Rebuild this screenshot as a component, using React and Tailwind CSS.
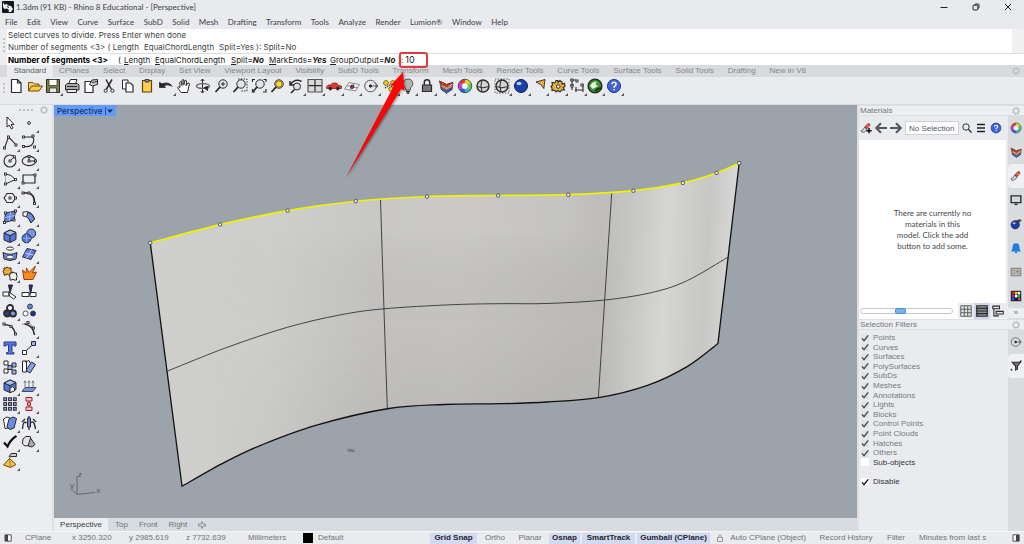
import React from "react";

const K = "#2b2b2b";

function Svg({ children, label, size = "size-4" }) {
  return (
    <svg viewBox="0 0 16 16" className={"block shrink-0 overflow-visible " + size} fill="none" stroke={K} strokeWidth="1" role="img" aria-label={label}>
      {children}
    </svg>
  );
}

const node = (x, y) => <rect key={x + "-" + y} x={x - 1} y={y - 1} width="2" height="2" fill="#fff" strokeWidth=".9" />;

const lens = (
  <>
    <circle cx="9" cy="6" r="4.2" fill="#dfe6ee" />
    <path d="M6 9.2 1.5 14" strokeWidth="1.8" />
  </>
);

const wheel = (
  <g strokeWidth="3.4">
    <path d="M8 3A5 5 0 0 1 12.3 5.5" stroke="#f5d020" />
    <path d="M12.3 5.5A5 5 0 0 1 12.3 10.5" stroke="#5ad03a" />
    <path d="M12.3 10.5A5 5 0 0 1 8 13" stroke="#20c0c0" />
    <path d="M8 13A5 5 0 0 1 3.7 10.5" stroke="#3050f0" />
    <path d="M3.7 10.5A5 5 0 0 1 3.7 5.5" stroke="#d030d8" />
    <path d="M3.7 5.5A5 5 0 0 1 8 3" stroke="#f03028" />
    <circle cx="8" cy="8" r="6.8" strokeWidth=".9" stroke="#444" />
    <circle cx="8" cy="8" r="3.2" strokeWidth=".5" stroke="#777" fill="#fff" />
  </g>
);

const globe = (
  <>
    <circle cx="8" cy="8" r="6" fill="#d3d3d3" strokeWidth="1.4" />
    <path d="M2.4 8.6Q8 11 13.6 8.6M7 2.2Q4.8 8 7 13.8" strokeWidth="1" />
  </>
);

const layers = (
  <>
    <path d="M1.5 3 8.5 6.5 15 4.5 14 11.5 8.5 15 3.4 11.4Z" fill="#fff" strokeWidth=".8" />
    <path d="M1.5 3 8.5 6.5 15 4.5 9 9 3 6Z" fill="#d83a22" stroke="#7c1d10" strokeWidth=".8" />
    <path d="M2.6 6.5 8.5 10.2 14.5 7 14.2 9 8.6 12.2 3 8.7Z" fill="#f0b070" stroke="#51301b" strokeWidth=".6" />
    <path d="M3 9.2 8.5 12.5 14.2 9.5 13.7 11.7 8.5 15 3.4 11.6Z" fill="#4b62c8" stroke="#1f2445" strokeWidth=".6" />
  </>
);

const brush = (
  <>
    <path d="M6 7 10 2.5Q13 .8 13.5 4L9.5 9Z" fill="#e0452d" stroke="#742016" strokeWidth=".7" />
    <path d="M9 4.5 12 7" stroke="#f7b7a4" />
    <path d="M6 7.2 9.3 9.4Q8.5 12 6 13Q1.5 15 1.5 11.5Q4.5 11.5 6 7.2Z" fill="#e3e3e3" strokeWidth=".9" />
  </>
);

const helpMark = (
  <>
    <circle cx="8" cy="8" r="6.6" fill="#3f63d8" stroke="#27408f" />
    <path d="M6 6.3Q6 4.3 8 4.3T10.1 6.2Q10.1 7.4 8.2 8.6V9.7M8.2 11v1.3" stroke="#fff" strokeWidth="1.5" />
  </>
);

const osnapMark = (
  <>
    <circle cx="7.5" cy="8" r="5.8" stroke="#555" />
    <path d="M7 8H15M12.5 5.8 15 8 12.5 10.2" stroke="#555" />
    <circle cx="7.5" cy="8" r="1.2" fill="#222" />
  </>
);

const topIcons = [
  ["New", false, <path d="M3.5 1.5H9.5L13 5V14.5H3.5ZM9.5 1.5V5H13" fill="#fff" strokeWidth="1.2" />],
  ["Open", false, <g stroke="#6d4d13"><path d="M1.5 13V4.5H6L7.5 6H12V8" fill="#f5d26a" /><path d="M1.5 13 4.5 8H15.5L12 13Z" fill="#ffc94a" /></g>],
  ["Save", true, <><path d="M1.5 1.5H14.5V14.5H1.5Z" fill="#80803c" /><path d="M4 1.5H12V7.5H4Z" fill="#fff" strokeWidth=".7" /><path d="M4.5 10H11.5V14.5H4.5Z" fill="#e8e8e8" strokeWidth=".7" /></>],
  ["Print", false, <><path d="M4.5 6 6.5 1.5H13L11.5 6" fill="#fff" /><path d="M1.5 7 3.5 5.5H13.5L15 7V12H1.5Z" fill="#a9a9a9" /><path d="M3 11.5H12.5V14.5H3Z" fill="#e7e7e7" /><path d="M3 8.5H13" /></>],
  ["Properties", false, <><path d="M2 3.5H10V14.5H2Z" fill="#fff" strokeWidth="1.2" /><path d="M6.5 6.5 9 2 14.5 1.5V6.5L9.5 8Z" fill="#ccc" /><path d="M9 4.5 14 3.5" /></>],
  ["Cut", false, <><path d="M5 1.5 10.3 11M11 1.5 5.5 11" strokeWidth="1.5" /><circle cx="4.7" cy="12.7" r="1.6" /><circle cx="11.4" cy="12.7" r="1.6" /></>],
  ["Copy", false, <><path d="M2.5 2H8V11H2.5Z" fill="#fff" /><path d="M6 5H10.5L13 7.5V14H6Z" fill="#fff" strokeWidth="1.2" /></>],
  ["Paste", false, <><path d="M3.5 2.5H12.5V14H3.5Z" fill="#ffcf4d" stroke="#5c4510" strokeWidth="1.2" /><path d="M6 1.5H10V4H6Z" fill="#8b8b8b" strokeWidth=".8" /></>],
  ["Undo", true, <path d="M1.5 4.2V9.5H7.5L5.8 7.7Q9.5 5.8 14.2 8.2Q10.5 3.2 4 5.9Z" fill="#222" strokeWidth=".8" />],
  ["Pan", false, <path d="M5 14.5 1.5 9.5Q2 8 4 9.5L3.8 4Q4.5 3 5.4 4L6 7.5V2Q7 1 7.8 2V7L8.8 2.5Q10 1.6 10.5 3L10.2 7.7 12 5Q13.2 4.6 13.4 6L11.5 14.5Z" fill="#fff" />],
  ["Rotate view", false, <><path d="M7.5 1V15M5.7 3 7.5 1 9.3 3M5.7 13 7.5 15 9.3 13" /><ellipse cx="8" cy="8" rx="6.5" ry="2.4" stroke="#666" strokeWidth="1.4" /><path d="M9 9.5 12.5 12.5 13 8.5Z" fill="#222" /></>],
  ["Zoom", false, <>{lens}<path d="M7 6H11M9 4V8" /></>],
  ["Zoom window", false, <>{lens}<path d="M6 1H15V13H9" strokeDasharray="1.5 1.3" /></>],
  ["Zoom extents", false, <>{lens}<path d="M1.5 4V1.5H4M12.5 1.5H15V4M15 11V14H12M1.5 11V14H4" strokeWidth="1.2" /></>],
  ["Zoom selected", false, <>{lens}<circle cx="9" cy="6" r="3.2" fill="#ffd83d" stroke="#8a6900" /></>],
  ["Undo view", true, <><circle cx="9" cy="8.5" r="3.5" fill="#ddd" /><path d="M6.5 11.5 3 15" strokeWidth="1.6" /><path d="M2 3V7H6M2.5 6.5Q7 0 13.5 3.5" strokeWidth="1.5" /></>],
  ["Viewports", true, <><path d="M1 1.5H15V14H1Z" fill="#d9d9d9" stroke="#555" strokeWidth="1.2" /><path d="M8 2V13.5M1.5 7.7H14.5" strokeWidth="1.2" /></>],
  ["Car", true, <><path d="M.5 9 2.2 7H5L6.5 5H10.5L12 7.3 15.5 8V10.5H.5Z" fill="#dd3a30" stroke="#7d1b16" strokeWidth=".7" /><circle cx="4.3" cy="10.6" r="1.4" fill="#222" /><circle cx="11.8" cy="10.6" r="1.4" fill="#222" /></>],
  ["Construction plane", true, <><path d="M.5 11 5 4.5 15.5 6.5 11.5 13Z M2.8 7.7 13.5 9.8M5.9 12 10.3 5.5" fill="#eee" stroke="#777" strokeWidth=".8" /><circle cx="8.2" cy="8.8" r="1.7" fill="#b34" /></>],
  ["Object snap", true, osnapMark],
  ["Select", true, <><circle cx="4" cy="5" r="2.4" fill="#f5ce2c" stroke="#8a6a00" /><circle cx="11" cy="5" r="2.4" fill="#f5ce2c" stroke="#8a6a00" /><path d="M3 10 8 7 13 11" strokeDasharray="1.4 1" strokeWidth="1.4" /><circle cx="9" cy="11" r="2.2" fill="#f5ce2c" stroke="#8a6a00" /></>],
  ["Hide", true, <><path d="M5.5 10Q3.1 7.7 3.2 5.5Q3.7 1 8 1T12.8 5.5Q12.9 7.7 10.5 10V12H5.5Z" fill="#b4b4b4" stroke="#555" /><path d="M6 13.3H10M6.7 15H9.3" strokeWidth="1.3" /></>],
  ["Lock", true, <><path d="M5.3 7V4.3Q5.3 1.7 8 1.7T10.7 4.3V7" strokeWidth="1.5" /><path d="M3.5 7H12.5V13.5H3.5Z" fill="#777" strokeWidth="1.2" /></>],
  ["Layers", true, layers],
  ["Render colour", false, wheel],
  ["Shade", false, globe],
  ["Shade selected", true, <><path d="M1 1H15V15H1Z" strokeDasharray="1.4 1.4" stroke="#555" />{globe}</>],
  ["Render", true, <><circle cx="8" cy="8" r="6.5" fill="#1d3fae" stroke="#101d4a" /><ellipse cx="6" cy="5.5" rx="2.5" ry="1.8" fill="#b4cdfa" stroke="none" /></>],
  ["Spotlight", true, <path d="M5 4 14 1.5 12.8 10.5Q10.5 5.5 5 4Z" fill="#f2ae36" strokeWidth=".9" />],
  ["Options", true, <><path d="M6 2.5H8V4.5L10 2.5 12 4V6L14.5 5.5 15 8.5 13 9.5 14.5 12H11.5L10 14 8 12.5 6 14 4.5 12 2 12.5V10L1 8.5 2.5 7 2 4.5 5 5Z" fill="#f1b23a" strokeWidth="1.1" /><circle cx="8.3" cy="8.5" r="1.8" fill="#eee" /></>],
  ["Dimensions", true, <><path d="M3 1V12M1 2H7M1 7H5M6 12H14M7 9V14M14 6V14" strokeWidth="1.1" />{node(3, 2)}{node(8, 3)}{node(3, 8)}{node(13, 7)}</>],
  ["Grasshopper", true, <><circle cx="8" cy="8" r="6.8" fill="#3c9632" strokeWidth="1.6" /><path d="M3 8Q6 2.5 10 4 7 6 11 8L6 11Z" fill="#e5f5db" stroke="none" /><path d="M8 13Q11 10 14 10" stroke="#123c10" strokeWidth="2" /></>],
  ["Help", true, helpMark],
];

const cube = "M2 5 8 2 14 4.5V11.5L8 14.5 2 12ZM2 5 8 7.5 14 4.5M8 7.5V14.5";

const sideIcons = [
  ["Pointer", false, <path d="M5 2V12L7.3 10 9.3 14 11 13 9 9.4H12Z" fill="#fff" />],
  ["Point", true, <circle cx="8" cy="8" r="1.4" fill="#fff" />],
  ["Polyline", true, <><path d="M2.5 14 6.5 3 9.5 6 14 11" strokeWidth="1.1" />{node(2.5, 14)}{node(6.5, 3)}{node(14, 11)}</>],
  ["Curve", true, <><path d="M2.5 3H9Q14 2.5 12.5 8T2.5 12.5" strokeWidth="1.1" />{node(2.5, 3)}{node(12, 2)}{node(2.5, 12.5)}{node(13.5, 13)}</>],
  ["Circle", true, <><circle cx="8" cy="8" r="6" strokeWidth="1.1" /><path d="M8 8 12.3 3.8" />{node(8, 8)}{node(12.3, 3.8)}</>],
  ["Ellipse", true, <><ellipse cx="8" cy="8" rx="6.8" ry="4.6" strokeWidth="1.1" /><path d="M8 3.5V8H14" />{node(8, 8)}{node(8, 3.5)}{node(14.5, 8)}</>],
  ["Arc", true, <><path d="M3.5 3Q9 3 13.5 8.5M3.5 13 13.5 8.5" strokeWidth="1" /><path d="M3.5 3V13" stroke="#aaa" />{node(3.5, 3)}{node(3.5, 13)}{node(13.5, 8.5)}</>],
  ["Rectangle", true, <><path d="M2 4H14V12H2Z" strokeWidth="1.2" />{node(2, 12)}{node(14, 4)}</>],
  ["Polygon", true, <><path d="M5 3.5H10.5L13.5 8 10.5 12.5H5L2 8Z" strokeWidth="1.1" />{node(8, 8)}{node(13.5, 8)}</>],
  ["Fillet", true, <><path d="M2 3H7Q13.5 4 13.5 13" strokeWidth="1.7" />{node(2, 3)}{node(8, 3)}{node(13.5, 13.5)}</>],
  ["Surface", true, <><path d="M3.5 4 13.5 2 12 11 2.5 13.5Z" fill="#6482dc" /><path d="M8.5 3 7 12.2M3 8.5 13 6.5" stroke="#c6d2f8" strokeWidth=".7" />{node(3.5, 4)}{node(13.5, 2)}{node(2.5, 13.5)}{node(12, 11)}</>],
  ["Surface tools", true, <><path d="M2 3Q11 1 13.5 10L10 14Q8.5 7 2 7Z" fill="#fff" /><path d="M7 3Q12 5 13.5 10L10 14Q8.5 10 5.5 7.5Z" fill="#6d8ae4" /></>],
  ["Box", true, <><path d={cube} fill="#5476df" /><path d="M2 5 8 7.5 14 4.5 8 2Z" fill="#a8bdf8" /></>],
  ["Solids", true, <><circle cx="10.2" cy="5.5" r="4.5" fill="#7995ec" /><circle cx="5.6" cy="10.3" r="4.5" fill="#4f72dc" /><path d="M1.5 10.3H10M5.6 6V14.5" stroke="#b7c7fa" strokeWidth=".7" /></>],
  ["SubD", true, <><ellipse cx="8" cy="2.6" rx="3.5" ry="1.6" fill="#fff" /><path d="M1 6.5Q8 10 15 6.5L14 13Q8 16 2 13Z" fill="#6886e0" /><ellipse cx="8" cy="11" rx="3.5" ry="1.8" fill="#fff" strokeWidth=".7" /></>],
  ["Mesh", true, <><path d="M6 2.5 15 4.5 10 13.5 1.5 11Z" fill="#5d7ce0" /><path d="M10.5 3.5 5.5 12.5M4 7 12.5 9" stroke="#dde5ff" strokeWidth=".8" /></>],
  ["Join", true, <><path d="M2 3H4Q5 1 6.5 3H9V5.5Q11 6.5 9 8V10H6.5Q5 8 4 10H2V8Q0 6.5 2 5Z" fill="#f3ab2d" /><path d="M8 8H10Q11.5 6 12 8H14.5V10Q16 11.5 14.5 12.5V15H12Q10.5 13 10 15H8V12Q6.5 11 8 10Z" fill="#f5f2ec" /></>],
  ["Explode", false, <path d="M1.5 5 5 8 5.5 3 8 7.5 14.5 1 11.5 8 15.5 7 12 14.5H3Z" fill="#f68b1f" stroke="#a33b0a" />],
  ["Trim", false, <><path d="M1 8H7V12H1ZM7 8 14 13 11.5 15 7 11.5Z" fill="#fff" /><path d="M6.5 1H10.5L8 8.5Z" fill="#142c8a" /></>],
  ["Split", false, <><path d="M1 8.5H8V12.5H1ZM9 8.5H15V12.5H9Z" fill="#fff" /><path d="M8 1H11.5L9.5 10Z" fill="#142c8a" /></>],
  ["Group", true, <><circle cx="8" cy="5" r="3" fill="#fff" strokeWidth="1.8" /><circle cx="5" cy="10.5" r="3" fill="#26408f" strokeWidth="1.8" /><circle cx="11" cy="10.5" r="3" fill="#7e98e2" strokeWidth="1.8" /></>],
  ["Ungroup", false, <><circle cx="9" cy="3.5" r="2.5" fill="#5f83dc" strokeWidth=".8" /><circle cx="4.5" cy="10.5" r="2.5" fill="#fff" strokeWidth=".8" /><circle cx="12" cy="10.5" r="2.5" fill="#1c3791" strokeWidth=".8" /></>],
  ["Edit points", false, <><path d="M2 3.5Q11.5 3.5 13.5 13" strokeWidth="1.4" />{node(2, 3)}{node(9, 5.5)}{node(13.5, 13)}</>],
  ["Control points", true, <><path d="M3.5 3Q12 4 13.5 14" strokeWidth="1.6" /><path d="M1 3.5 7 1.5 13 7" stroke="#777" strokeWidth=".8" />{node(7, 1.5)}{node(12.5, 7)}</>],
  ["Text", false, <path d="M2 2H14V6H12Q12 4.5 10 4.5V11.5Q10 12.5 12 12.7V14H4.5V12.7Q6.5 12.5 6.5 11.5V4.5Q4 4.5 4 6H2Z" fill="#5576e0" stroke="#263c8e" />],
  ["Move", true, <><path d="M1.5 10.5H5.5V14.5H1.5Z" fill="#fff" /><path d="M10.5 1.5H14.5V5.5H10.5Z" fill="#9db2f0" /><path d="M6 9.8 10 6.2" strokeWidth="1.3" strokeDasharray="1.3 .8" /></>],
  ["Copy objects", false, <><path d="M2 2H6V6H2ZM2 10H6V14H2Z" fill="#fff" /><path d="M10 4H14V8H10ZM6 6.5H10V10.5H6ZM10 11H14V15H10Z" fill="#9db2f0" /></>],
  ["Rotate", false, <><path d="M1.5 2H5.5V13H1.5ZM4 3 8 1.5 9 4" fill="#fff" /><path d="M10.5 3 14.5 5.5 9 14 5 11.5Z" fill="#86a0ee" /></>],
  ["Boolean", true, <><path d={cube} fill="#5476df" /><path d="M2 5 8 2 14 4.5 8 7.5Z" fill="#a8bdf8" /><path d="M8 10Q11 7.5 12.5 10V13L8 14.5Z" fill="#fff" /></>],
  ["Extrude", true, <><path d="M4 9V3M8 9V3M12 9V3M2.8 4.5 4 2.8 5.2 4.5M6.8 4.5 8 2.8 9.2 4.5M10.8 4.5 12 2.8 13.2 4.5" stroke="#7a7a7a" /><path d="M4 9.5H15L12 13.5H1Z" fill="#7590e2" strokeWidth=".8" /></>],
  ["Array", true, <g strokeWidth="1">{[1.8, 6.6, 11.4].map((y) => [1.8, 6.6, 11.4].map((x) => <rect key={x + "_" + y} x={x} y={y} width="2.8" height="2.8" fill="#8ea6e8" />))}</g>],
  ["Align", true, <g stroke="#a01c1c"><path d="M8 1V15" strokeDasharray="1.5 .8" /><path d="M5 1.5H11V5H5ZM6.5 6.7H9.5V9.3H6.5ZM5 11H11V14.5H5Z" fill="#f6c8c8" /></g>],
  ["Deform", true, <><path d="M1.5 4 5 2 8 3 6.5 13 3 13.5Z" fill="#fff" /><path d="M7 4 11 2 14.5 3.5 12 13 8 14.5 5 12Z" fill="#6d8be5" /></>],
  ["Flow", true, <><path d="M8 1V15M5.5 8Q2 5 1.5 14M9.5 8Q13 4 14.5 14M1 7 4 4M12 4 15 7" strokeWidth="1.3" /><path d="M6.5 3H9.5V12H6.5Z" fill="#6f8de0" /></>],
  ["Check", true, <path d="M2 8.5 5.5 12.5Q8.5 5.5 14.5 2" strokeWidth="2.2" stroke="#111" />],
  ["Primitive", true, <><path d="M2 5 5 2.5H9.5V11L4 12 1.5 10Z" fill="#e6e6e6" /><path d="M9.5 4 14 10.5 11 13 7 12Z" fill="#aaa" /></>],
  ["Light", true, <><path d="M1.5 12 7.5 5.5 14 11.5 8.5 14.5Z" fill="#f3c14b" stroke="#6b4c08" /><path d="M7.5 5.5 8.5 14.5" stroke="#a77b14" /><path d="M7 4 9 .5H14.5V3.5H10Z" fill="#ccc" /></>],
];

function ToolButton({ icon }) {
  const [label, menu, art] = icon;
  return (
    <button type="button" title={label} aria-label={label} className="relative size-4">
      <Svg label={label} size="size-4">{art}</Svg>
      {menu && (
        <svg viewBox="0 0 3 3" className="absolute -right-0.5 -bottom-0.5 size-[3px]" aria-hidden="true">
          <path d="M3 0V3H0Z" fill="#555" />
        </svg>
      )}
    </button>
  );
}

function Gear() {
  return (
    <button type="button" aria-label="Panel options">
      <svg viewBox="0 0 8 8" className="block size-2" fill="none" stroke="#b9bdc2">
        <circle cx="4" cy="4" r="2.6" strokeWidth="1.2" />
        <circle cx="4" cy="4" r="3.6" strokeWidth=".8" strokeDasharray="1.4 1.4" />
      </svg>
    </button>
  );
}

function Grip({ dots }) {
  return <span className={"bg-[radial-gradient(#c0c4c9_1px,transparent_1px)] bg-[size:4px_4px] " + dots} />;
}

function smooth(points, start = true) {
  let d = (start ? "M" : "L") + points[0].join(" ");
  for (let i = 0; i < points.length - 1; i++) {
    const p0 = points[Math.max(i - 1, 0)];
    const p1 = points[i];
    const p2 = points[i + 1];
    const p3 = points[Math.min(i + 2, points.length - 1)];
    d += `C${p1[0] + (p2[0] - p0[0]) / 6} ${p1[1] + (p2[1] - p0[1]) / 6} ${p2[0] - (p3[0] - p1[0]) / 6} ${p2[1] - (p3[1] - p1[1]) / 6} ${p2[0]} ${p2[1]}`;
  }
  return d;
}

const topEdge = [[151, 243.5], [220.7, 225.3], [288, 211.3], [356, 202], [427, 197.3], [498, 196.3], [568, 195.5], [633, 191.5], [682.3, 183.7], [716, 173.7], [738.5, 164]];
const middle = [[168, 371.5], [227, 348], [288, 327.7], [340, 315.5], [384, 309.3], [450, 305.3], [500, 304.2], [547, 304], [605, 300.5], [653, 292.7], [687, 281], [727, 258]];
const bottomEdge = [[182.7, 486.3], [225, 462.5], [263, 444.7], [317, 425.3], [387.5, 409], [444, 404.8], [500, 404], [547, 402.3], [598, 398], [647, 385.7], [687, 366.7], [717.3, 344]];

function Scene() {
  const outline = smooth(topEdge) + smooth([...bottomEdge].reverse(), false) + "Z";
  return (
    <svg viewBox="54 106 803 412" preserveAspectRatio="xMidYMid slice" className="block size-full" role="img" aria-label="Perspective view of a curved surface">
      <defs>
        <linearGradient id="shade" gradientUnits="userSpaceOnUse" x1="150" y1="300" x2="738" y2="330">
          <stop offset="0" stopColor="#cfcfcd" />
          <stop offset=".2" stopColor="#cdcdcb" />
          <stop offset=".38" stopColor="#c3c2c0" />
          <stop offset=".52" stopColor="#c4c3c1" />
          <stop offset=".76" stopColor="#bbbab8" />
          <stop offset=".87" stopColor="#d5d5d3" />
          <stop offset=".94" stopColor="#c8c7c5" />
          <stop offset="1" stopColor="#dcdddd" />
        </linearGradient>
        <linearGradient id="depth" x1="0" y1="0" x2="0" y2="1">
          <stop offset=".2" stopColor="#fff" stopOpacity=".12" />
          <stop offset=".5" stopColor="#888" stopOpacity="0" />
          <stop offset=".8" stopColor="#777" stopOpacity=".12" />
        </linearGradient>
        <linearGradient id="core" x1="0" x2="1">
          <stop offset=".1" stopColor="#fff" stopOpacity="0" />
          <stop offset=".45" stopColor="#fff" />
          <stop offset=".7" stopColor="#fff" />
          <stop offset=".82" stopColor="#fff" stopOpacity="0" />
        </linearGradient>
        <mask id="centre">
          <rect x="151" y="160" width="590" height="330" fill="url(#core)" />
        </mask>
      </defs>
      <path d={outline} fill="url(#shade)" />
      <path d={outline} fill="url(#depth)" mask="url(#centre)" />
      <g fill="none" stroke="#333" strokeWidth=".9">
        <path d={smooth(middle)} />
        <path d="M380.7 200.5Q384 309 387.5 409M611.3 194Q604 305 598 398" />
      </g>
      <path d={"M151 243.5" + smooth(bottomEdge, false) + "L738.5 164"} fill="none" stroke="#111" strokeWidth="1.3" />
      <path d={smooth(topEdge)} fill="none" stroke="#f3f000" strokeWidth="1.7" />
      {topEdge.map(([x, y]) => (
        <rect key={x} x={x - 1.5} y={y - 1.5} width="3" height="3" rx=".6" fill="#fff" stroke="#333" strokeWidth=".8" />
      ))}
      <path d="M347.5 449.5H353L355 451.7H349Z" fill="#7c8187" stroke="#6a6e73" strokeWidth=".6" />
      <path d="M78 494.5V476M78 494.5 96 492.5M78 494.5 73 490" fill="none" stroke="#555b61" strokeWidth=".8" />
      <g fill="#555b61" className="font-['Liberation_Sans'] text-[8px]">
        <text x="79" y="477">z</text>
        <text x="97" y="493">x</text>
        <text x="71" y="488">y</text>
      </g>
    </svg>
  );
}

const menus = ["File", "Edit", "View", "Curve", "Surface", "SubD", "Solid", "Mesh", "Drafting", "Transform", "Tools", "Analyze", "Render", "Lumion®", "Window", "Help"];
const toolTabs = ["CPlanes", "Select", "Display", "Set View", "Viewport Layout", "Visibility", "SubD Tools", "Transform", "Mesh Tools", "Render Tools", "Curve Tools", "Surface Tools", "Solid Tools", "Drafting", "New in V8"];
const filters = ["Points", "Curves", "Surfaces", "PolySurfaces", "SubDs", "Meshes", "Annotations", "Lights", "Blocks", "Control Points", "Point Clouds", "Hatches", "Others"];

const panelTabs = [
  ["Display colour", wheel],
  ["Layers", layers],
  ["Materials", brush],
  ["Display", <><path d="M1.5 2.5H14.5V11.5H1.5Z" fill="#d2d6da" strokeWidth="1.8" /><path d="M6 13.8H10" strokeWidth="2" /></>],
  ["Rendering", <><circle cx="7" cy="9" r="5.5" fill="#1f3fa8" stroke="#0e1b48" /><ellipse cx="5.5" cy="7" rx="2" ry="1.4" fill="#a9c4f7" stroke="none" /><path d="M9 4Q12 1 15 3L12 6Z" fill="#555" /></>],
  ["Notifications", <g stroke="none"><path d="M1.5 12.5Q3.5 10 3.5 6.5Q3.5 1.5 8 1.5T12.5 6.5Q12.5 10 14.5 12.5Z" fill="#1c7fe0" /><path d="M6 13H10Q10 15 8 15T6 13Z" fill="#1c7fe0" /></g>],
  ["Sheet", <><path d="M1.5 3H14.5V13H1.5Z" fill="#b9bbb8" stroke="#666" /><path d="M1.5 6H14.5M1.5 9.5H14.5" stroke="#8e908e" strokeWidth=".8" /><path d="M8 7.5H12" stroke="#d05a28" /></>],
  ["Palette", <><rect x="1.5" y="1.5" width="13" height="13" fill="#111" /><g stroke="none"><path d="M2.5 2.5H6V6H2.5Z" fill="#d92a2a" /><path d="M6.5 2.5H10V6H6.5Z" fill="#f1d62a" /><path d="M10.5 2.5H13.5V6H10.5Z" fill="#fff" /><path d="M2.5 6.5H6V10H2.5Z" fill="#8a2ad0" /><path d="M6.5 6.5H10V10H6.5Z" fill="#fff" /><path d="M10.5 6.5H13.5V10H10.5Z" fill="#2ba84a" /><path d="M2.5 10.5H6V13.5H2.5Z" fill="#2858e8" /><path d="M10.5 10.5H13.5V13.5H10.5Z" fill="#e23a9a" /></g></>],
];

function Option({ name, value, className }) {
  return (
    <a href="#option" className={"flex whitespace-pre " + className}>
      <span><u>{name[0]}</u>{name.slice(1)}{value ? "=" : ""}</span>
      {value && <b className="italic">{value}</b>}
    </a>
  );
}

function CheckRow({ label, checked, muted }) {
  return (
    <label className={"flex h-[9px] shrink-0 items-center gap-1 leading-[9px] " + (muted ? "text-[#777b80]" : "text-[#33363a]")}>
      <span className="grid size-2">
        <input
          type="checkbox"
          defaultChecked={checked}
          className={"peer col-start-1 row-start-1 m-0 size-2 appearance-none " + (muted ? "bg-[#e0e3e7]" : "bg-white")}
        />
        <svg viewBox="0 0 8 8" className={"pointer-events-none invisible col-start-1 row-start-1 size-2 peer-checked:visible " + (muted ? "stroke-[#44484d]" : "stroke-[#111]")} fill="none" strokeWidth="1.4" aria-hidden="true">
          <path d="M1 4.4 3 6.6 7.2 1.4" />
        </svg>
      </span>
      {label}
    </label>
  );
}

function PanelHeader({ title }) {
  return (
    <div className="flex h-[11px] items-center justify-between border-y border-[#dcdfe3] bg-[#eceef1] pr-1 text-[#74787d]">
      <h2 className="pl-px">{title}</h2>
      <Gear />
    </div>
  );
}

function SideTab({ label, art, active }) {
  return (
    <button type="button" aria-label={label} className={"flex h-6 w-full items-center justify-center " + (active ? "rounded-l bg-[#eef0f3]" : "")}>
      <Svg label={label} size="size-3">{art}</Svg>
    </button>
  );
}

function Toggle({ children, on, className = "" }) {
  return (
    <button type="button" aria-pressed={!!on} className={"h-[11px] whitespace-nowrap text-center " + (on ? "bg-[#d3d9ee] font-bold text-[#22252c] " : "") + className}>
      {children}
    </button>
  );
}

export default function App() {
  return (
    <div className="flex h-screen flex-col overflow-hidden bg-[#e9ebee] font-['Liberation_Sans',Arial,sans-serif] text-[8px] leading-[10px] text-[#6f7378]">
      <header className="flex h-[29px] shrink-0 flex-col bg-[#e8eaed] font-['Lato','Open_Sans',sans-serif] text-[#3c3f43]">
        <div className="flex h-[14px] items-center justify-between pr-3 pl-0.5">
          <div className="flex items-center gap-0.5">
            <svg viewBox="0 0 12 12" className="size-3" aria-label="Rhino">
              <rect width="12" height="12" rx="1" fill="#15171a" />
              <path d="M1 1.5 3 4 4.5 2.5 6 4.5 9 5 11 8 9 11H6.5L7 9 5 7.5 2.5 8 1 6Z" fill="#f1f2f4" />
              <path d="M5 5.5 7 6.5" stroke="#15171a" />
            </svg>
            <h1>1.3dm (91 KB) - Rhino 8 Educational - [Perspective]</h1>
          </div>
          <div className="flex items-center gap-6">
            <button type="button" aria-label="Minimise"><svg viewBox="0 0 8 8" className="size-2" stroke="#222"><path d="M.5 4.5H7.5" /></svg></button>
            <button type="button" aria-label="Restore"><svg viewBox="0 0 8 8" className="size-2" fill="none" stroke="#222"><rect x="1" y="2.2" width="4.8" height="4.8" rx="1" /><path d="M2.8 2V1.6Q3 1 3.8 1H6Q7 1 7 2V4.5Q7 5.3 6 5.3" /></svg></button>
            <button type="button" aria-label="Close"><svg viewBox="0 0 8 8" className="size-2" stroke="#222"><path d="M1 1 7 7M7 1 1 7" /></svg></button>
          </div>
        </div>
        <nav className="ml-[5px] flex h-[15px] w-[503px] items-center justify-between">
          {menus.map((m) => <button type="button" key={m}>{m}</button>)}
        </nav>
      </header>

      <section className="flex shrink-0 bg-white font-['Inter',sans-serif] text-[#3c3f43]">
        <div className="flex w-[7px] justify-center bg-[#eceef1] pt-2"><Grip dots="h-4 w-1" /></div>
        <div className="min-w-0 flex-1">
          <div className="flex h-[25px] border-b border-[#dcdee1]">
            <div className="flex flex-1 flex-col justify-center gap-[2px] pl-px">
              <p>Select curves to divide. Press Enter when done</p>
              <p className="flex gap-[5px] whitespace-nowrap">
                <span>Number of segments &lt;3&gt; ( Length</span><span>EqualChordLength</span><span>Split=Yes ): Split=No</span>
              </p>
            </div>
            <div className="w-[12px] bg-[#f0f0f1]" />
          </div>
          <div className="flex h-[11px] items-center pl-px text-[#222]">
            <label htmlFor="command" className="w-[110px] whitespace-nowrap font-bold text-black">Number of segments &lt;3&gt;</label>
            <span className="w-[6px]">(</span>
            <Option name="Length" className="w-[31px]" />
            <Option name="EqualChordLength" className="w-[76px]" />
            <Option name="Split" value="No" className="w-[38px]" />
            <Option name="MarkEnds" value="Yes" className="w-[61px]" />
            <Option name="GroupOutput" value="No" className="w-[68px]" />
            <span>):</span>
            <div className="relative z-20 -ml-1 h-[16px] w-[29px] shrink-0">
              <input id="command" defaultValue="10" className="block size-full rounded-[3px] border-2 border-[#e03a3e] bg-transparent pl-1 text-[9px] text-[#222] outline-none" />
              <svg viewBox="0 0 64 112" className="pointer-events-none absolute top-[17px] -left-[54px] h-28 w-16 overflow-visible drop-shadow-[1px_1px_1px_rgba(0,0,0,0.4)]" aria-hidden="true">
                <path d="M58 3 46 16 49 16.5 1 108.5 56 20 59.5 21.5Z" fill="#fb0505" />
              </svg>
            </div>
          </div>
        </div>
      </section>

      <div className="flex h-[12px] shrink-0 items-center justify-between bg-[#d8dadd] pr-1 text-[#84888d]">
        <div className="flex h-full items-center gap-[6px] pl-[7px]" role="tablist">
          <button type="button" role="tab" aria-selected="true" className="h-full w-[46px] bg-[#e9ebee] text-[#5d6166]">Standard</button>
          <div className="flex w-[747px] justify-between">
            {toolTabs.map((t) => <button type="button" role="tab" aria-selected="false" key={t} className="whitespace-nowrap">{t}</button>)}
          </div>
        </div>
        <Gear />
      </div>

      <div className="flex h-7 shrink-0 items-start border-b border-[#d9dbde] pt-px">
        <Grip dots="mx-0.5 mt-1 h-3 w-1" />
        <div className="flex w-[614px] justify-between" role="toolbar">
          {topIcons.map((i) => <ToolButton key={i[0]} icon={i} />)}
        </div>
      </div>

      <main className="flex min-h-0 flex-1">
        <aside className="flex w-[54px] shrink-0 flex-col border-r-2 border-[#dcdfe3] bg-[#ebedf0]">
          <div className="flex h-[10px] items-center justify-end gap-1.5 pr-1">
            <Grip dots="h-1 w-4" />
            <Gear />
          </div>
          <div className="grid h-[354px] w-[37px] grid-cols-2 content-between gap-x-[3px] pl-0.5" role="toolbar">
            {sideIcons.map((i) => <ToolButton key={i[0]} icon={i} />)}
          </div>
        </aside>

        <div className="flex min-w-0 flex-1 flex-col">
          <div className="relative min-h-0 flex-1 bg-[#9ca3ab]">
            <div className="absolute inset-0"><Scene /></div>
            <button type="button" className="absolute top-0 left-0 flex h-[11px] items-center gap-[3px] bg-[#629bf8] px-[3px] font-['Inter',sans-serif] font-medium text-[#16306b]">
              Perspective
              <svg viewBox="0 0 8 8" className="size-2" aria-hidden="true"><path d="M.5 0V8" stroke="#2d4f94" /><path d="M2 2.5H8L5 6Z" fill="#16306b" /></svg>
            </button>
          </div>
          <div className="flex h-[13px] shrink-0 items-center gap-[11px] bg-[#d8dbdf]" role="tablist">
            <button type="button" role="tab" aria-selected="true" className="-mr-1 h-full w-[54px] bg-[#eceef1] text-[#3c3f43]">Perspective</button>
            <button type="button" role="tab" aria-selected="false">Top</button>
            <button type="button" role="tab" aria-selected="false">Front</button>
            <button type="button" role="tab" aria-selected="false">Right</button>
            <button type="button" aria-label="Add viewport"><svg viewBox="0 0 8 8" className="size-2" fill="none" stroke="#8c9095"><path d="M4 .5 5 3H7.5V5H5L4 7.5 3 5H.5V3H3Z" /></svg></button>
          </div>
        </div>

        <aside className="flex w-[167px] shrink-0 flex-col border-l-2 border-[#dcdfe3] bg-[#e9ebee]">
          <PanelHeader title="Materials" />
          <div className="flex h-[203px] shrink-0">
            <div className="flex min-w-0 flex-1 flex-col">
              <div className="flex h-6 items-center gap-[3px] pl-px">
                <button type="button" aria-label="Add material"><Svg label="Add material" size="size-3">{brush}<path d="M12 8V15M8.5 11.5H15.5" stroke="#111" strokeWidth="2" /></Svg></button>
                <button type="button" aria-label="Back"><svg viewBox="0 0 10 10" className="size-3" fill="none" stroke="#55585c" strokeWidth="1.8"><path d="M10 5H1M5 1 1 5 5 9" /></svg></button>
                <button type="button" aria-label="Forward"><svg viewBox="0 0 10 10" className="size-3" fill="none" stroke="#55585c" strokeWidth="1.8"><path d="M0 5H9M5 1 9 5 5 9" /></svg></button>
                <input aria-label="Material name" defaultValue="No Selection" className="h-[14px] w-[54px] border border-[#cfd2d6] bg-white px-[3px] text-[#55595e]" />
                <button type="button" aria-label="Search"><svg viewBox="0 0 10 10" className="size-2.5" fill="none" stroke="#333"><circle cx="4" cy="4" r="3.2" /><path d="M6.3 6.3 9.6 9.6" strokeWidth="1.4" /></svg></button>
                <button type="button" aria-label="Menu" className="mx-0.5"><svg viewBox="0 0 8 10" className="h-2.5 w-2" stroke="#222" strokeWidth="1.5"><path d="M0 1.5H8M0 5H8M0 8.5H8" /></svg></button>
                <button type="button" aria-label="Help"><Svg label="Help" size="size-3">{helpMark}</Svg></button>
              </div>
              <div className="mr-0.5 flex flex-1 flex-col bg-white">
                <p className="m-auto w-[90px] pt-4 text-center font-['Lato','Open_Sans',sans-serif] leading-[11px] text-[#44474b]">
                  There are currently no<br />materials in this<br />model. Click the add<br />button to add some.
                </p>
                <div className="flex h-[16px] items-start justify-between pb-px pl-px">
                  <input type="range" aria-label="Preview size" defaultValue="42" className="mt-[5px] h-[6px] w-[93px] appearance-none rounded-sm border border-[#c4c8cd] bg-white [&::-webkit-slider-thumb]:h-[6px] [&::-webkit-slider-thumb]:w-[11px] [&::-webkit-slider-thumb]:appearance-none [&::-webkit-slider-thumb]:rounded-xs [&::-webkit-slider-thumb]:border [&::-webkit-slider-thumb]:border-[#4d93cf] [&::-webkit-slider-thumb]:bg-[#74b3ea]" />
                  <div className="flex h-full items-center bg-[#e9ebee]">
                    <button type="button" aria-label="Grid" className="p-0.5"><Svg label="Grid" size="size-3"><path d="M1 1H15V15H1ZM5.7 1V15M10.3 1V15M1 5.7H15M1 10.3H15" fill="#e2e4e2" strokeWidth="1.2" stroke="#555" /></Svg></button>
                    <button type="button" aria-label="List" className="bg-[#d0d5ea] p-0.5"><Svg label="List" size="size-3"><path d="M1 1H15V15H1Z" fill="#8a8d94" strokeWidth="1.6" /><path d="M1 4.5H15M1 8H15M1 11.5H15" strokeWidth="1.5" /></Svg></button>
                    <button type="button" aria-label="Tree" className="p-0.5"><Svg label="Tree" size="size-3"><path d="M1 1.5H10V5H1ZM5.5 8.5H15V12H5.5ZM2.5 5V14.5H9" fill="none" strokeWidth="1.4" /></Svg></button>
                  </div>
                </div>
              </div>
            </div>
            <div className="flex w-4 flex-col bg-[#d9dbde]">
              {panelTabs.map(([label, art]) => <SideTab key={label} label={label} art={art} active={label === "Materials"} />)}
              <button type="button" aria-label="More panels" className="h-[10px] bg-[#eceef1] leading-[10px]">»</button>
            </div>
          </div>
          <PanelHeader title="Selection Filters" />
          <div className="flex min-h-0 flex-1">
            <div className="flex flex-1 flex-col gap-[10px] pt-[3px] pl-0.5">
              <div role="group" aria-label="Selection filters" className="flex h-[134px] shrink-0 flex-col justify-between">
                {filters.map((f) => <CheckRow key={f} label={f} checked muted />)}
                <CheckRow label="Sub-objects" />
              </div>
              <CheckRow label="Disable" checked />
            </div>
            <div className="w-4 bg-[#d9dbde]">
              <SideTab label="Object snaps" art={osnapMark} />
              <SideTab label="Selection filters" active art={<path d="M3 3H14L10 8V12L7.5 13.5V8ZM1 12 3 14M13 2 15.5 1" fill="#777" strokeWidth="1.5" />} />
            </div>
          </div>
        </aside>
      </main>

      <footer className="flex h-[13px] shrink-0 items-center justify-between border-t border-[#f6f7f8] bg-[#e9ebee] px-1">
        <div className="flex items-center whitespace-nowrap">
          <button type="button" aria-label="Left panel" className="w-[21px]"><svg viewBox="0 0 8 8" className="size-2"><path d="M1 .8H7.2V7.2H1Z" fill="#fff" stroke="#555" /><path d="M1 1H4V7H1Z" fill="#444" /></svg></button>
          <span className="w-[47px]">CPlane</span>
          <span className="w-[57px]">x 3250.320</span>
          <span className="w-[57px]">y 2985.619</span>
          <span className="w-[62px]">z 7732.639</span>
          <span className="w-[55px]">Millimeters</span>
          <button type="button" className="flex items-center gap-[5px]"><span className="size-[10px] bg-black" />Default</button>
        </div>
        <div className="flex items-center">
          <div className="flex items-center gap-0.5 whitespace-nowrap">
            <Toggle on className="w-[47px]">Grid Snap</Toggle>
            <Toggle className="w-[32px]">Ortho</Toggle>
            <Toggle className="w-[34px]">Planar</Toggle>
            <Toggle on className="w-[31px]">Osnap</Toggle>
            <Toggle on className="w-[53px]">SmartTrack</Toggle>
            <Toggle on className="w-[73px]">Gumball (CPlane)</Toggle>
          </div>
          <svg viewBox="0 0 8 8" className="ml-[6px] size-2" fill="none" stroke="#999" aria-label="Lock"><path d="M1.5 3.5H6.5V7.5H1.5ZM2.5 3.5V2Q4 -.5 5.5 2V3.5" /></svg>
          <Toggle className="w-[88px]">Auto CPlane (Object)</Toggle>
          <Toggle className="w-[68px]">Record History</Toggle>
          <Toggle className="w-[32px]">Filter</Toggle>
          <span className="ml-[7px] w-[68px] whitespace-nowrap">Minutes from last s</span>
          <button type="button" aria-label="Right panel" className="ml-[25px]"><svg viewBox="0 0 8 8" className="size-2"><path d="M1 .8H7.2V7.2H1Z" fill="#fff" stroke="#555" /><path d="M4 1H7V7H4Z" fill="#444" /></svg></button>
        </div>
      </footer>
    </div>
  );
}
